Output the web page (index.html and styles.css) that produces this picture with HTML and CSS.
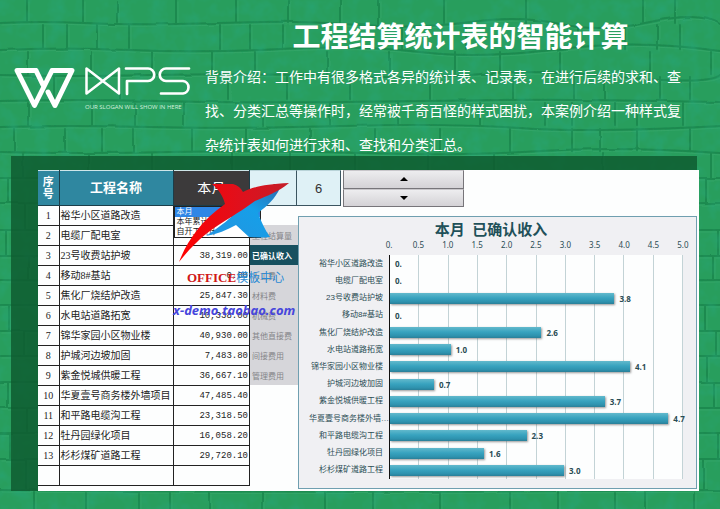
FILE: index.html
```html
<!DOCTYPE html>
<html lang="zh-CN">
<head>
<meta charset="utf-8">
<title>工程结算统计表的智能计算</title>
<link rel="stylesheet" href="styles.css">
</head>
<body>
<svg class="wall" viewBox="0 0 720 509" preserveAspectRatio="xMidYMid slice" aria-hidden="true">
  <defs>
    <filter id="grain" x="0" y="0" width="100%" height="100%">
      <feTurbulence type="fractalNoise" baseFrequency="0.06" numOctaves="3" seed="4"/>
      <feColorMatrix values="0 0 0 0 0.02  0 0 0 0 0.38  0 0 0 0 0.2  1.2 0 0 0 -0.52"/>
    </filter>
    <filter id="soft" x="0" y="0" width="100%" height="100%">
      <feTurbulence type="fractalNoise" baseFrequency="0.04" numOctaves="1" seed="9"/>
      <feDisplacementMap in="SourceGraphic" scale="3" xChannelSelector="R" yChannelSelector="G"/>
      <feGaussianBlur stdDeviation="0.6"/>
    </filter>
    <g id="joints" fill="none" stroke-linecap="round">
      <path d="M0 23Q40 21 84 23T176 24T262 22T360 25T470 22T560 24T650 22T720 24M0 50Q60 47 130 50T280 49T420 52T560 49T720 51M0 75Q70 77 150 75T330 76T480 74T620 77T720 75M0 101Q80 99 160 101T340 102T500 100T720 102M0 127Q70 125 150 127T340 126T520 128T720 126M0 152Q80 154 170 152T360 153T540 151T720 153M0 178H720M0 203Q350 205 720 203M0 230H720M0 256H720M0 280Q400 283 720 280M0 305H720M0 331H720M0 356H720M0 382H720M0 408H720M0 433H720M0 459H720M0 490Q300 493 720 490"/>
      <path d="M27 0V22M83 0V22M117 2V22M176 0V23M236 0V22M288 0V23M340 0V23M378 0V24M444 0V23M526 0V23M643 0V22M675 0V23M43 25V48M67 25V48M97 25V48M129 25V48M220 25V49M250 25V49M283 25V49M402 25V49M466 25V49M578 25V49M625 25V49M657 25V49M680 25V49M28 52V74M91 52V74M152 52V74M212 52V74M255 52V74M327 52V74M390 52V74M455 52V74M500 52V74M560 52V74M650 52V74M711 52V74M54 77V99M120 77V99M228 77V99M287 77V99M350 77V99M430 77V99M513 77V99M574 77V99M605 77V99M660 77V99M690 77V99M28 103V125M92 103V125M135 103V125M184 103V125M263 103V125M330 103V125M398 103V125M480 103V125M545 103V125M572 103V125M615 103V125M637 103V125M683 103V125M14 129V151M65 129V151M102 129V151M133 129V151M192 129V151M246 129V151M310 129V151M375 129V151M440 129V151M510 129V151M572 129V151M600 129V151M637 129V151M690 129V151"/>
      <path d="M23 153V177M89 153V177M152 153V177M232 153V177M290 153V177M355 153V177M428 153V177M494 153V177M603 153V177M711 153V177M8 179V202M706 179V202M25 204V229M718 231V255M6 231V255M713 257V279M28 257V279M705 306V330M9 306V330M716 332V355M24 332V355M707 357V381M7 383V407M714 383V407M27 409V432M718 434V458M10 434V458M704 460V489M26 460V489M34 493V509M86 493V509M139 493V509M170 493V509M210 493V509M262 493V509M325 493V509M373 493V509M440 493V509M510 493V509M558 493V509M615 493V509M645 493V509M694 493V509"/>
    </g>
  </defs>
  <rect width="720" height="509" fill="#289e5d"/>
  <g filter="url(#soft)">
    <use href="#joints" class="joint-light" transform="translate(2 2)"/>
    <use href="#joints" class="joint-dark"/>
  </g>
  <rect width="720" height="509" filter="url(#grain)"/>
</svg>

<header class="intro">
  <svg class="logo" viewBox="0 0 178 50" role="img" aria-label="WPS">
    <g fill="none" stroke="#fff" stroke-linejoin="round">
      <path d="M22 4.500H3L20.500 39.500L38 4.500H58L41 39.500L34 26M22 4.500L29 19" stroke-width="5" stroke-linecap="round"/>
      <path d="M72.500 2.500V27.500L105 2.500V27.500Z" stroke-width="2.500"/>
      <path d="M113 28V15H134A6 6 0 0 0 134 2.500H112M175 2.500H152A6 6 0 0 0 152 15H169A6.300 6.300 0 0 1 169 27.500H147" stroke-width="2.700" stroke-linecap="round"/>
    </g>
    <text x="71" y="43" class="slogan">OUR SLOGAN WILL SHOW IN HERE</text>
  </svg>
  <div class="copy">
    <h1>工程结算统计表的智能计算</h1>
    <p>背景介绍：工作中有很多格式各异的统计表、记录表，在进行后续的求和、查找、分类汇总等操作时，经常被千奇百怪的样式困扰，本案例介绍一种样式复杂统计表如何进行求和、查找和分类汇总。</p>
  </div>
</header>

<main class="board">
  <div class="sheet">
    <table class="ledger">
      <colgroup><col class="col-no"><col class="col-name"><col class="col-sum"></colgroup>
      <thead>
        <tr>
          <th class="no-head">序号</th>
          <th>工程名称</th>
          <th class="period">
            <select aria-label="统计期间"><option>本月</option><option>本年累计</option><option>自开工累计</option></select>
            <ul class="options"><li class="on">本月</li><li>本年累计</li><li>自开工累计</li></ul>
          </th>
        </tr>
      </thead>
      <tbody>
        <tr><td>1</td><td>裕华小区道路改造</td><td>0.00</td></tr>
        <tr><td>2</td><td>电缆厂配电室</td><td>0.00</td></tr>
        <tr><td>3</td><td>23号收费站护坡</td><td>38,319.00</td></tr>
        <tr><td>4</td><td>移动8#基站</td><td>0.00</td></tr>
        <tr><td>5</td><td>焦化厂烧结炉改造</td><td>25,847.30</td></tr>
        <tr><td>6</td><td>水电站道路拓宽</td><td>10,338.00</td></tr>
        <tr><td>7</td><td>锦华家园小区物业楼</td><td>40,930.00</td></tr>
        <tr><td>8</td><td>护城河边坡加固</td><td>7,483.80</td></tr>
        <tr><td>9</td><td>紫金悦城供暖工程</td><td>36,667.10</td></tr>
        <tr><td>10</td><td>华夏壹号商务楼外墙项目</td><td>47,485.40</td></tr>
        <tr><td>11</td><td>和平路电缆沟工程</td><td>23,318.50</td></tr>
        <tr><td>12</td><td>牡丹园绿化项目</td><td>16,058.20</td></tr>
        <tr><td>13</td><td>杉杉煤矿道路工程</td><td>29,720.10</td></tr>
        <tr><td></td><td></td><td></td></tr>
      </tbody>
    </table>

    <section class="panel">
      <div class="tools">
        <span class="cell">4</span>
        <span class="cell narrow">6</span>
        <div class="spinner">
          <button type="button" aria-label="增加"><svg viewBox="0 0 8 4"><path d="M0 4L4 0L8 4Z"/></svg></button>
          <button type="button" aria-label="减少"><svg viewBox="0 0 8 4"><path d="M0 0L4 4L8 0Z"/></svg></button>
        </div>
      </div>
      <div class="body">
        <nav class="measures">
          <button type="button">工程结算量</button>
          <button type="button" class="on">已确认收入</button>
          <button type="button">人工费</button>
          <button type="button">材料费</button>
          <button type="button">机械费</button>
          <button type="button">其他直接费</button>
          <button type="button">间接费用</button>
          <button type="button">管理费用</button>
        </nav>
        <figure class="chart">
          <figcaption>本月 &nbsp;已确认收入</figcaption>
          <div class="axis"><span>0.</span><span>0.5</span><span>1.0</span><span>1.5</span><span>2.0</span><span>2.5</span><span>3.0</span><span>3.5</span><span>4.0</span><span>4.5</span><span>5.0</span></div>
          <div class="plot">
            <div class="names"><span>裕华小区道路改造</span><span>电缆厂配电室</span><span>23号收费站护坡</span><span>移动8#基站</span><span>焦化厂烧结炉改造</span><span>水电站道路拓宽</span><span>锦华家园小区物业楼</span><span>护城河边坡加固</span><span>紫金悦城供暖工程</span><span class="cut">华夏壹号商务楼外墙…</span><span>和平路电缆沟工程</span><span>牡丹园绿化项目</span><span>杉杉煤矿道路工程</span></div>
            <div class="bars">
              <div><i style="width:0%"></i><b>0.</b></div>
              <div><i style="width:0%"></i><b>0.</b></div>
              <div><i style="width:76.6%"></i><b>3.8</b></div>
              <div><i style="width:0%"></i><b>0.</b></div>
              <div><i style="width:51.7%"></i><b>2.6</b></div>
              <div><i style="width:20.7%"></i><b>1.0</b></div>
              <div><i style="width:81.9%"></i><b>4.1</b></div>
              <div><i style="width:15%"></i><b>0.7</b></div>
              <div><i style="width:73.3%"></i><b>3.7</b></div>
              <div><i style="width:95%"></i><b>4.7</b></div>
              <div><i style="width:46.6%"></i><b>2.3</b></div>
              <div><i style="width:32.1%"></i><b>1.6</b></div>
              <div><i style="width:59.4%"></i><b>3.0</b></div>
            </div>
          </div>
        </figure>
      </div>
    </section>

    <div class="stamp">
      <svg viewBox="0 0 110 80" aria-hidden="true">
        <defs>
          <linearGradient id="red" x1="0" x2="1"><stop offset="0" stop-color="#f00"/><stop offset=".55" stop-color="#e0101c"/><stop offset="1" stop-color="#c41e28"/></linearGradient>
          <linearGradient id="blue" x1="0" y1="1" x2="1" y2="0"><stop offset="0" stop-color="#2494e0"/><stop offset=".6" stop-color="#169fe8"/><stop offset="1" stop-color="#2c6eb0"/></linearGradient>
        </defs>
        <path fill="url(#blue)" d="M27 53C42 43 52 35 63 24C74 15 84 10 101 5C96 16 88 23 79 30C82 38 86 47 91 54Q80 55 70 54L57 42C48 47 38 51 27 53Z"/>
        <path fill="url(#red)" d="M0 79C7 61 20 39 46 21C44 13 40 7 33 1H54Q61 3 64 9C74 4 86 1 110 0C99 9 88 13 76 18C60 30 44 38 27 51C17 59 8 69 0 79Z"/>
      </svg>
      <p class="brand"><span>OFFICE</span>模板中心</p>
      <p class="site">x-demo.taobao.com</p>
    </div>
  </div>
</main>
</body>
</html>
```

FILE: styles.css
```css
* { box-sizing: border-box; }

body {
  margin: 0;
  min-height: 100vh;
  position: relative;
  overflow-x: hidden;
  background: #269b5b;
  font-family: "Liberation Sans", "Noto Sans CJK SC", sans-serif;
}

h1, p, ul, figure { margin: 0; padding: 0; }

button, select {
  font: inherit;
  color: inherit;
  border: 0;
  border-radius: 0;
  padding: 0;
  margin: 0;
  background: none;
}

.wall {
  position: absolute;
  inset: 0;
  width: 100%;
  height: 100%;
  z-index: -1;
}
.joint-light { stroke: #33a567; stroke-width: 1; }
.joint-dark { stroke: #1c8a50; stroke-width: 2; }

.intro {
  display: flex;
  align-items: flex-start;
  gap: 13px;
  padding: 20px 36px 0 14px;
  height: 156px;
  color: #fff;
}
.logo { width: 178px; height: 50px; flex: none; margin-top: 46px; overflow: visible; }
.slogan { font: 6px "Open Sans", sans-serif; fill: #d4f0de; }
.copy { flex: 1; }
h1 {
  font-size: 28px;
  line-height: 36px;
  font-weight: 700;
  text-align: center;
  padding-left: 32px;
}
.copy p { font-size: 14px; line-height: 34px; margin-top: 4px; }

.board {
  margin: 0 23px 0 11px;
  padding: 14px 0 0 27px;
  background: #0d5a2ed0;
}
.sheet {
  position: relative;
  display: flex;
  align-items: flex-start;
  margin-right: -2px;
  padding: 0 2px 2px 0;
  background: #fdfefe;
}

.ledger {
  width: 212px;
  flex: none;
  table-layout: fixed;
  border-collapse: collapse;
  color: #222;
}
.col-no { width: 21px; }
.col-name { width: 114px; }
.ledger th {
  height: 35px;
  padding: 0;
  border: 1px solid #1b3d49;
  border-top-color: #cfe6ea;
  background: #2f87a0;
  color: #fff;
  font-size: 13px;
  line-height: 12px;
}
.ledger .no-head { font-size: 11px; border-left: 0; padding: 0 4px; }
.ledger td {
  height: 20px;
  padding: 0 2px;
  border: 1px solid #222;
  font-size: 10px;
  line-height: 14px;
  white-space: nowrap;
}
.ledger td:first-child { border-left: 0; text-align: center; font-family: "Liberation Serif", serif; }
.ledger td:nth-child(2) { padding-left: 1px; font-family: "Liberation Serif", "Noto Sans CJK SC", serif; }
.ledger td:last-child { text-align: right; padding-right: 1px; font: 9px/14px "Liberation Mono", monospace; }

.ledger .period { position: relative; background: #3c3a3b; }
.period select {
  appearance: none;
  width: 100%;
  height: 33px;
  font-size: 14px;
  font-weight: 400;
  text-align: center;
  text-align-last: center;
}
.options {
  position: absolute;
  top: 35px;
  left: 0;
  width: 87px;
  border: 1px solid #222;
  background: #fff;
  color: #222;
  list-style: none;
  text-align: left;
  font-size: 8px;
  font-weight: 400;
  line-height: 10px;
  z-index: 1;
}
.options li { padding-left: 2px; }
.options .on { background: #2f86e6; color: #fff; }

.panel { flex: 1; min-width: 0; }
.tools { display: flex; height: 36px; }
.cell {
  width: 47px;
  display: grid;
  place-items: center;
  border: 1px solid #3c5560;
  border-left: 0;
  border-top-color: #b9d3d8;
  background: #dff1f6;
  color: #333;
  font-size: 13px;
}
.cell.narrow { width: 44px; }
.spinner {
  display: grid;
  grid-template-rows: 1fr 1fr;
  width: 121px;
  height: 37px;
  margin-left: 2px;
}
.spinner button {
  display: grid;
  place-items: center;
  border: 1px solid #77757a;
  border-top-color: #c8c6ca;
  background: linear-gradient(#ededef, #d4d2d6);
}
.spinner svg { width: 8px; height: 4px; }

.body { display: flex; }
.measures {
  width: 48px;
  flex: none;
  margin-top: 19px;
  display: grid;
  grid-auto-rows: 20px;
  align-content: start;
  align-self: flex-start;
  background: #d6d6da;
  color: #858589;
  font-size: 8px;
}
.measures button { text-align: left; padding-left: 2px; white-space: nowrap; }
.measures .on { background: #17505f; color: #fff; font-weight: 700; }

.chart {
  flex: 1;
  min-width: 0;
  margin-top: 10px;
  padding: 4px 13px 9px 0;
  border: 1px solid #6f9fb0;
  background: #f0f0f3;
  color: #2a4c54;
}
figcaption {
  font-family: "Liberation Serif", "Noto Sans CJK SC", serif;
  font-size: 15px;
  line-height: 18px;
  font-weight: 700;
  text-align: center;
  color: #1f5059;
}
.axis {
  display: flex;
  justify-content: space-between;
  margin: 0 -10px 0 80px;
  font: 8px/12px "Noto Sans", sans-serif;
}
.axis span { width: 20px; text-align: center; }
.plot { display: flex; margin-top: 4px; }
.names {
  width: 90px;
  flex: none;
  display: grid;
  grid-template-rows: repeat(13, 1fr);
  align-items: center;
  justify-items: end;
  padding-right: 6px;
  font-size: 8px;
  line-height: 12px;
  white-space: nowrap;
}
.names .cut { margin-right: -6px; }
.bars {
  flex: 1;
  height: 224px;
  display: grid;
  grid-template-rows: repeat(13, 1fr);
  border-left: 1px solid #111;
  background: repeating-linear-gradient(90deg, #fdfefe 0 calc(10% - 1px), #c3d3d6 calc(10% - 1px) 10%);
}
.bars div { display: flex; align-items: center; gap: 5px; }
.bars i {
  height: 11px;
  flex: none;
  background: linear-gradient(#62b9cc, #38a3bf 45%, #2e92ae 80%, #2a7f98);
  box-shadow: 1px 1px 2px #5559;
}
.bars b { font: 700 8px/11px "Open Sans", sans-serif; }

.stamp {
  position: absolute;
  top: 13px;
  left: 135px;
  pointer-events: none;
  white-space: nowrap;
  z-index: 2;
}
.stamp svg { display: block; width: 110px; height: 80px; margin-left: 6px; }
.brand {
  margin: 5px 0 0 14px;
  font: 12px/18px "Noto Sans CJK SC", sans-serif;
  color: #2a8ad4;
}
.brand span { font: 700 13px/18px "Liberation Serif", serif; color: #d01818; }
.site {
  margin-top: 13px;
  font: italic 700 13px/20px "Noto Sans", sans-serif;
  color: #4646dc;
}
```
